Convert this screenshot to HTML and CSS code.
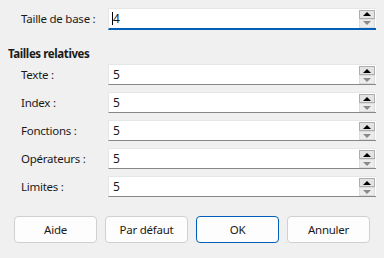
FILE: index.html
```html
<!DOCTYPE html>
<html>
<head>
<meta charset="utf-8">
<link rel="stylesheet" href="styles.css">
</head>
<body>
<div class="dlg">
  <div class="row top">
    <span class="lbl">Taille de base :</span>
    <div class="field focus"><span class="caret"></span><span class="val">4</span>
      <div class="spin"><div class="up"><span class="tri-up"></span></div><div class="down"><span class="tri-down"></span></div></div>
    </div>
  </div>
  <div class="section">Tailles relatives</div>
  <div class="rows">
    <div class="row">
      <span class="lbl">Texte :</span>
      <div class="field"><span class="val">5</span>
        <div class="spin"><div class="up"><span class="tri-up"></span></div><div class="down"><span class="tri-down"></span></div></div>
      </div>
    </div>
    <div class="row">
      <span class="lbl">Index :</span>
      <div class="field"><span class="val">5</span>
        <div class="spin"><div class="up"><span class="tri-up"></span></div><div class="down"><span class="tri-down"></span></div></div>
      </div>
    </div>
    <div class="row">
      <span class="lbl">Fonctions :</span>
      <div class="field"><span class="val">5</span>
        <div class="spin"><div class="up"><span class="tri-up"></span></div><div class="down"><span class="tri-down"></span></div></div>
      </div>
    </div>
    <div class="row">
      <span class="lbl">Opérateurs :</span>
      <div class="field"><span class="val">5</span>
        <div class="spin"><div class="up"><span class="tri-up"></span></div><div class="down"><span class="tri-down"></span></div></div>
      </div>
    </div>
    <div class="row">
      <span class="lbl">Limites :</span>
      <div class="field"><span class="val">5</span>
        <div class="spin"><div class="up"><span class="tri-up"></span></div><div class="down"><span class="tri-down"></span></div></div>
      </div>
    </div>
  </div>
  <div class="buttons">
    <button class="btn">Aide</button>
    <button class="btn">Par défaut</button>
    <button class="btn default">OK</button>
    <button class="btn">Annuler</button>
  </div>
</div>
</body>
</html>
```
FILE: styles.css
```css
html, body {
  margin: 0;
  padding: 0;
  background: #f0f0f0;
}
body {
  width: 384px;
  height: 258px;
  overflow: hidden;
  font-family: "Noto Sans", "Open Sans", sans-serif;
  font-size: 11.5px;
  letter-spacing: -0.25px;
  color: #1a1a1a;
}
.dlg {
  padding: 8px 8px 0 8px;
}
.row {
  display: flex;
  align-items: center;
  height: 21px;
}
.lbl {
  width: 87px;
  padding-left: 13px;
  flex: none;
}
.field {
  position: relative;
  flex: 1;
  height: 20px;
  background: #ffffff;
  border: 1px solid #e6e6e6;
  border-bottom: 1px solid #878787;
  border-right: none;
  box-sizing: content-box;
  display: flex;
  align-items: center;
  padding-left: 4px;
}
.field.focus {
  border-bottom: 2px solid #005fb8;
  height: 19px;
}
.row .field {
  height: 19px;
}
.caret {
  width: 1px;
  height: 13px;
  background: #000;
  margin-left: -1px;
}
.val {
  line-height: 19px;
  font-size: 12px;
}
.spin {
  position: absolute;
  right: 1px;
  top: 1px;
  width: 16px;
  height: 18px;
  display: flex;
  flex-direction: column;
  background: #f0f0f0;
}
.up, .down {
  flex: 1;
  box-sizing: border-box;
  display: flex;
  align-items: center;
  justify-content: center;
}
.up {
  border: 1px solid #adadad;
  background: #e3e3e3;
}
.down {
  border: 1px solid #dcdcdc;
  background: #ececec;
}
.tri-up {
  width: 0;
  height: 0;
  border-left: 4px solid transparent;
  border-right: 4px solid transparent;
  border-bottom: 4px solid #000;
}
.tri-down {
  width: 0;
  height: 0;
  border-left: 4px solid transparent;
  border-right: 4px solid transparent;
  border-top: 4px solid #8a8a8a;
}
.section {
  font-weight: bold;
  margin-top: 14px;
  height: 21px;
  line-height: 21px;
  letter-spacing: -0.4px;
}
.rows {
  display: flex;
  flex-direction: column;
  gap: 7px;
}
.buttons {
  display: flex;
  gap: 8px;
  padding-left: 6px;
  margin-top: 19px;
}
.btn {
  width: 83px;
  height: 27px;
  box-sizing: border-box;
  background: #fdfdfd;
  border: 1px solid #d0d0d0;
  border-radius: 4px;
  font-family: "Noto Sans", "Open Sans", sans-serif;
  font-size: 11.5px;
  letter-spacing: -0.25px;
  color: #1a1a1a;
  padding: 0;
}
.btn.default {
  border-color: #005fb8;
}
```
